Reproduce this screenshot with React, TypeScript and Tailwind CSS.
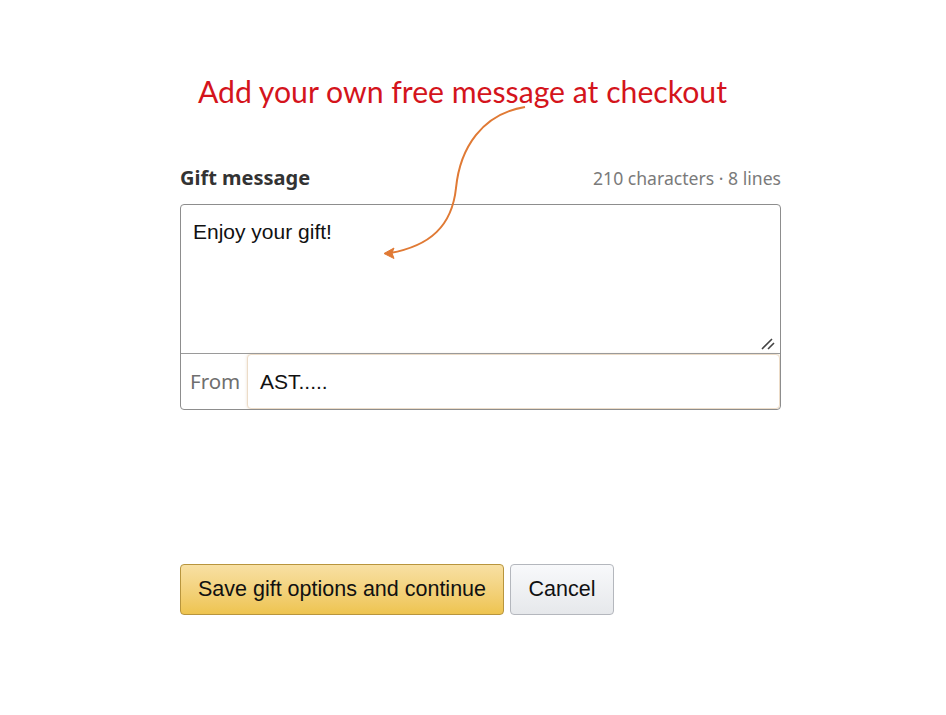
export default function App() {
  return (
    <div className="relative w-[946px] h-[715px] bg-white overflow-hidden">
      <h1 className="pt-[72px] pr-[21px] h-[112px] text-center text-[30.2px] leading-[38px] text-[#d4141c] font-['Lato',sans-serif] font-normal">
        Add your own free message at checkout
      </h1>

      <div className="ml-[180px] w-[601px] mt-[52px]">
        <div className="flex items-center justify-between h-[28px]">
          <span className="text-[20px] font-bold text-[#333] font-['Noto_Sans',sans-serif]">Gift message</span>
          <span className="text-[17.6px] text-[#7a7a7a] font-['Noto_Sans',sans-serif]">210 characters · 8 lines</span>
        </div>

        <div className="mt-[12px] border border-[#8d8d8d] rounded-[4px] overflow-hidden">
          <div className="relative h-[149px] border-b border-[#9a9a9a] px-[12px] pt-[14px]">
            <p className="text-[21px] leading-[26px] text-[#111] font-['Liberation_Sans',Arial,sans-serif]">Enjoy your gift!</p>
            <svg className="absolute right-[4px] bottom-[2px]" width="16" height="14" viewBox="0 0 16 14">
              <path d="M2 12 L12 2 M8 12 L14 6" stroke="#444" strokeWidth="1.6" fill="none" />
            </svg>
          </div>
          <div className="flex h-[55px]">
            <div className="w-[66px] flex items-center pl-[9px] text-[20.5px] text-[#6f6f6f] font-['Noto_Sans',sans-serif]">From</div>
            <div className="flex-1 flex items-center pl-[12px] rounded-[4px] border border-[#ecdcc8] shadow-[0_0_3px_rgba(200,160,110,0.35)] bg-white">
              <span className="text-[21px] text-[#111] font-['Liberation_Sans',Arial,sans-serif]">AST.....</span>
            </div>
          </div>
        </div>

        <div className="mt-[154px] flex gap-[6px]">
          <button className="w-[324px] h-[51px] rounded-[4px] border border-[#b8953d] bg-gradient-to-b from-[#f8e0a3] to-[#eec44f] text-[21.5px] text-[#111] font-['Liberation_Sans',Arial,sans-serif]">
            Save gift options and continue
          </button>
          <button className="w-[104px] h-[51px] rounded-[4px] border border-[#b4b7bd] bg-gradient-to-b from-[#f8f9fb] to-[#e6e8eb] text-[21.5px] text-[#111] font-['Liberation_Sans',Arial,sans-serif]">
            Cancel
          </button>
        </div>
      </div>

      <svg className="absolute left-0 top-0 pointer-events-none" width="946" height="715" viewBox="0 0 946 715">
        <path
          d="M525 107 C482 114 460 148 456 188 C452 226 430 246 390 253"
          stroke="#e07a35"
          strokeWidth="2"
          fill="none"
        />
        <path d="M384 253.5 L394 248 L392 253 L394 258.5 Z" fill="#e07a35" stroke="#e07a35" strokeWidth="1" />
      </svg>
    </div>
  );
}
